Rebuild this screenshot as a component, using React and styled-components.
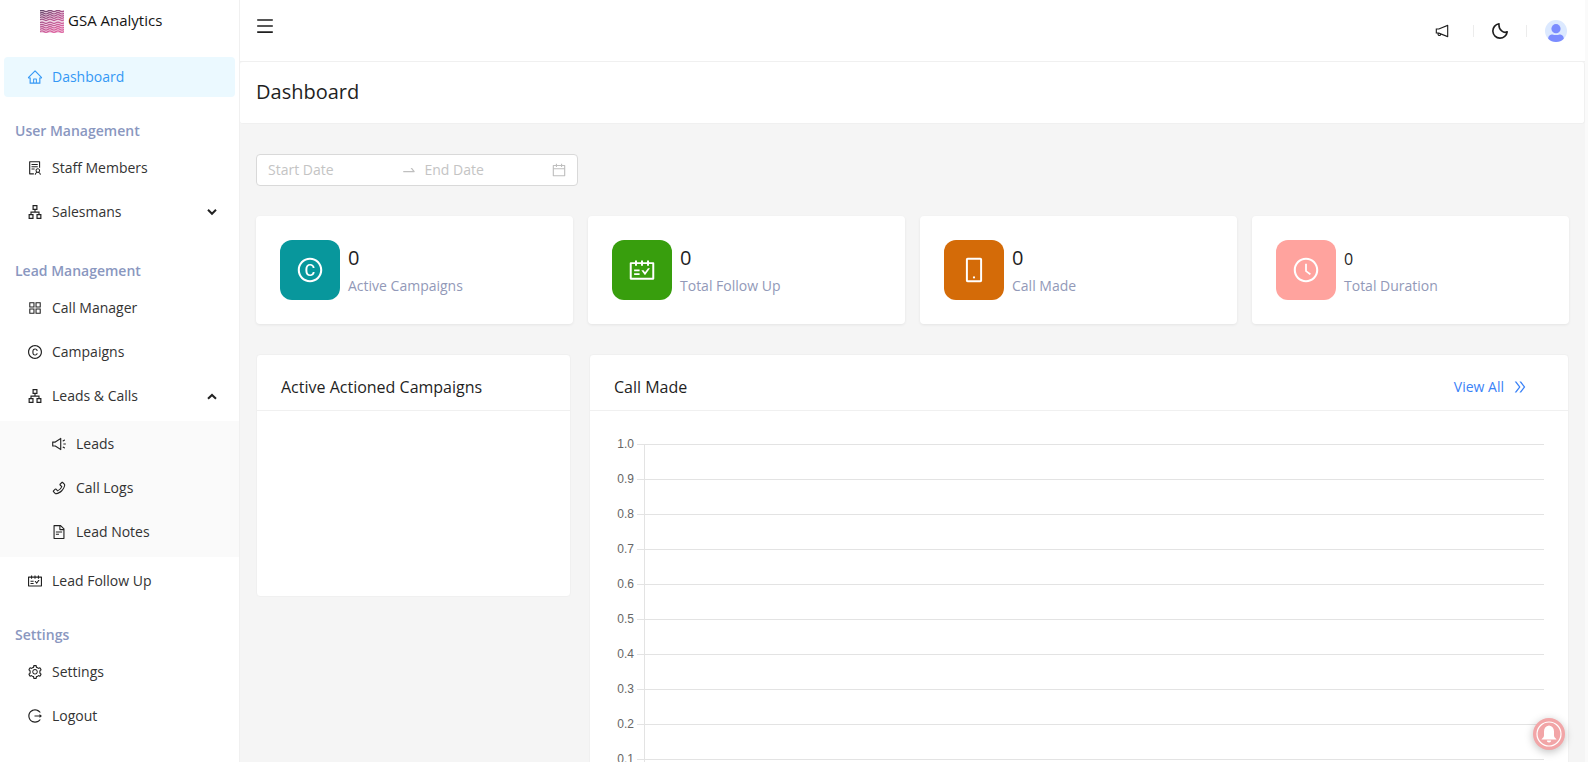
import React from 'react';
import styled, { createGlobalStyle } from 'styled-components';
import {
  AiOutlineApartment,
  AiOutlineAppstore,
  AiOutlineCalendar,
  AiOutlineClockCircle,
  AiOutlineCopyright,
  AiOutlineDoubleRight,
  AiOutlineFileText,
  AiOutlineHome,
  AiOutlineLogout,
  AiOutlineMenu,
  AiOutlineMobile,
  AiOutlineNotification,
  AiOutlinePhone,
  AiOutlineSchedule,
  AiOutlineSetting,
  AiOutlineSolution,
  AiOutlineSound,
  AiOutlineSwapRight,
} from 'react-icons/ai';

const GlobalStyle = createGlobalStyle`
  *, *::before, *::after { box-sizing: border-box; }
  body {
    margin: 0;
    background: #fafafa;
    color: #1f1f1f;
    font-family: 'Open Sans', 'Noto Sans', sans-serif;
    font-size: 14px;
    line-height: 22px;
  }
  h1, h2, h3, p, ul { margin: 0; padding: 0; }
  ul { list-style: none; }
  svg { display: block; flex: none; }
  button { font: inherit; color: inherit; background: none; border: 0; padding: 0; cursor: pointer; }
`;

const Shell = styled.div`
  display: flex;
  height: 100vh;
  padding-right: 3px;
  overflow: hidden;
`;

const Sidebar = styled.aside`
  flex: none;
  width: 240px;
  overflow: hidden;
  background: #fff;
  border-right: 1px solid #f0f0f0;
`;

const Brand = styled.a`
  display: flex;
  align-items: center;
  gap: 4px;
  height: 42px;
  margin-bottom: 15px;
  padding-left: 40px;
  color: #141414;
  font-size: 15px;
  text-decoration: none;

  span { padding-bottom: 2px; }
`;

const Nav = styled.nav`
  display: flex;
  flex-direction: column;
  gap: 24px;
`;

const NavHeading = styled.h2`
  margin-bottom: 7px;
  padding-left: 15px;
  color: #8a97bf;
  font-size: 14px;
  font-weight: 600;
  line-height: 20px;
`;

const NavList = styled.ul`
  display: flex;
  flex-direction: column;
  gap: 4px;
`;

const NavLink = styled.a`
  display: flex;
  align-items: center;
  gap: 9px;
  width: auto;
  height: 40px;
  margin: 0 4px;
  padding: 0 18px 0 ${(p) => (p.$nested ? 47 : 23)}px;
  border-radius: 4px;
  background: ${(p) => (p.$active ? '#ebf9ff' : 'transparent')};
  color: ${(p) => (p.$active ? '#3498f5' : '#333')};
  text-decoration: none;

  svg { color: ${(p) => (p.$active ? '#3498f5' : '#222')}; }
`;

const NavToggle = styled(NavLink)`
  width: calc(100% - 8px);
  text-align: left;

  span { flex: 1; }
`;

const Collapsible = styled.li`
  display: flex;
  flex-direction: column;
  gap: 5px;
`;

const Submenu = styled.ul`
  display: flex;
  flex-direction: column;
  gap: 4px;
  padding: ${(p) => (p.$open ? '3px 0 5px' : '0')};
  background: #fafafa;
`;

const Main = styled.div`
  flex: 1;
  min-width: 0;
  overflow: hidden;
  background: #f5f5f5;
`;

const TopBar = styled.header`
  display: flex;
  align-items: center;
  justify-content: space-between;
  height: 62px;
  padding: 0 18px 0 15px;
  background: #fff;
  border-bottom: 1px solid #f0f0f0;
`;

const MenuButton = styled.button`
  padding-bottom: 9px;
`;

const Tools = styled.div`
  display: flex;
  align-items: center;
  gap: 18px;
`;

const ToolButton = styled.button`
  display: flex;
  justify-content: center;
  width: ${(p) => p.$width}px;
`;

const Separator = styled.span`
  width: 1px;
  height: 12px;
  background: #ececec;
`;

const PageTitle = styled.div`
  padding: 14px 16px 16px;
  background: #fff;
  border-right: 1px solid #f0f0f0;
  border-bottom: 1px solid #f0f0f0;
  border-radius: 3px;

  h1 {
    font-size: 20px;
    font-weight: 400;
    line-height: 31px;
  }
`;

const Content = styled.main`
  display: flex;
  flex-direction: column;
  gap: 30px;
  padding: 30px 16px;
`;

const RangePicker = styled.div`
  display: flex;
  align-items: center;
  width: 322px;
  height: 32px;
  padding: 0 10px 0 11px;
  background: #fff;
  border: 1px solid #d9d9d9;
  border-radius: 4px;
  color: #bfbfbf;
`;

const RangeArrow = styled.span`
  padding: 0 8px 0 6px;
`;

const DateInput = styled.input`
  flex: 1;
  min-width: 0;
  padding: 0;
  border: 0;
  outline: 0;
  background: transparent;
  color: #333;
  font: inherit;

  &::placeholder { color: #c4c4c4; opacity: 1; }
`;

const StatGrid = styled.section`
  display: grid;
  grid-template-columns: repeat(4, 1fr);
  gap: 15px;
`;

const StatCard = styled.article`
  display: flex;
  gap: 8px;
  padding: 24px;
  background: #fff;
  border-radius: 4px;
  box-shadow: 0 1px 3px rgba(0, 0, 0, 0.07);
`;

const StatIcon = styled.span`
  display: grid;
  place-items: center;
  width: 60px;
  height: 60px;
  border-radius: 12px;
  background: ${(p) => p.$color};
  color: #fff;
`;

const StatText = styled.div`
  display: flex;
  flex-direction: column;
  justify-content: space-between;
  height: 56px;
  padding-top: 3px;
`;

const StatValue = styled.p`
  font-size: ${(p) => (p.$small ? 16 : 20)}px;
  line-height: ${(p) => (p.$small ? 32 : 29)}px;
`;

const StatLabel = styled.p`
  color: #9299b8;
  line-height: 21px;
`;

const PanelGrid = styled.section`
  display: grid;
  grid-template-columns: 9fr 28fr;
  align-items: start;
  gap: 18px;
`;

const Panel = styled.article`
  min-width: 0;
  background: #fff;
  border: 1px solid #f0f0f0;
  border-radius: 4px;
`;

const PanelHeader = styled.header`
  display: flex;
  align-items: center;
  justify-content: space-between;
  height: 56px;
  padding: 8px 24px 0;
  border-bottom: 1px solid #f0f0f0;

  h2 {
    font-size: 16px;
    font-weight: 400;
    line-height: 24px;
  }
`;

const PanelBody = styled.div`
  min-height: 185px;
  padding: 24px;
`;

const ViewAll = styled.a`
  display: flex;
  align-items: center;
  gap: 8px;
  padding: 0 16px;
  color: #3a82f7;
  text-decoration: none;
`;

const Chart = styled.svg`
  width: 100%;
  height: 400px;

  line { stroke: #e3e3e3; shape-rendering: crispEdges; }
  text {
    fill: #666;
    font-family: 'Liberation Sans', Arial, sans-serif;
    font-size: 12px;
    text-anchor: end;
  }
`;

const NotifyButton = styled.button`
  position: fixed;
  right: 23px;
  bottom: 12px;
  width: 32px;
  height: 32px;
  border-radius: 50%;
  background: #f2a5a7;
  box-shadow: 0 2px 8px rgba(0, 0, 0, 0.25);
`;

const WAVE_ROWS = [1, 3.2, 5.4, 7.6, 9.8, 12.8, 15, 17.2, 19.4, 21.6];

function LogoMark() {
  return (
    <svg width="24" height="23" viewBox="0 0 24 23" fill="none" strokeWidth="1.3">
      <defs>
        <linearGradient id="waves" gradientUnits="userSpaceOnUse" x1="0" y1="0" x2="12" y2="23">
          <stop offset="0" stopColor="#5d4668" />
          <stop offset="0.5" stopColor="#b0568f" />
          <stop offset="1" stopColor="#dd629f" />
        </linearGradient>
      </defs>
      <rect width="24" height="23" fill="#f0d5e5" />
      {WAVE_ROWS.map((y) => (
        <path key={y} stroke="url(#waves)" d={`M0 ${y}q2-1.4 4 0t4 0t4 0t4 0t4 0t4 0`} />
      ))}
    </svg>
  );
}

function Chevron({ up }) {
  return (
    <svg width="10" height="8" viewBox="0 0 10 8" fill="none" stroke="currentColor" strokeWidth="2">
      <path d={up ? 'M1 6.8L5 3L9 6.8' : 'M1 1.8L5 5.8L9 1.8'} />
    </svg>
  );
}

function Moon() {
  return (
    <svg width="16" height="16" viewBox="0 0 16 16" fill="none" stroke="#1f1f1f" strokeWidth="1.6" strokeLinejoin="round">
      <path d="M7 0.8A7.2 7.2 0 1 0 15.2 8.8C12 10.4 6.4 7.6 7 0.8Z" />
    </svg>
  );
}

function Avatar() {
  return (
    <svg width="22" height="22" viewBox="0 0 22 22">
      <circle cx="11" cy="11" r="11" fill="#dce9ff" />
      <circle cx="11" cy="8.7" r="4.6" fill="#7b8cff" />
      <path d="M3.2 18.7C3.2 15.5 5.5 14.4 7.4 14.4C9.6 15.3 12.4 15.3 14.6 14.4C16.5 14.4 18.8 15.5 18.8 18.7A11 11 0 0 1 3.2 18.7Z" fill="#7b8cff" />
    </svg>
  );
}

function Bell() {
  return (
    <svg width="32" height="32" viewBox="0 0 32 32">
      <circle cx="16" cy="16" r="12" fill="none" stroke="#fff" strokeWidth="1.2" />
      <path d="M16 7.6C12.6 8.1 11 10.4 11 13.4V17.2C11 18.9 9.9 19.8 8.4 21.4H23.6C22.1 19.8 21 18.9 21 17.2V13.4C21 10.4 19.4 8.1 16 7.6Z" fill="#fff" />
      <path d="M13.8 22.4H18.2A2.2 2 0 0 1 13.8 22.4Z" fill="#fff" />
    </svg>
  );
}

function NavItem({ icon: Icon, label, active, nested }) {
  return (
    <li>
      <NavLink href="#" $active={active} $nested={nested} aria-current={active ? 'page' : undefined}>
        <Icon size={16} />
        <span>{label}</span>
      </NavLink>
    </li>
  );
}

function NavGroup({ icon: Icon, label, open, children }) {
  return (
    <Collapsible>
      <NavToggle as="button" type="button" aria-expanded={Boolean(open)}>
        <Icon size={16} />
        <span>{label}</span>
        <Chevron up={open} />
      </NavToggle>
      <Submenu $open={open}>{open ? children : null}</Submenu>
    </Collapsible>
  );
}

const STATS = [
  { label: 'Active Campaigns', icon: AiOutlineCopyright, color: '#08979c' },
  { label: 'Total Follow Up', icon: AiOutlineSchedule, color: '#389e0d' },
  { label: 'Call Made', icon: AiOutlineMobile, color: '#d46b08' },
  { label: 'Total Duration', icon: AiOutlineClockCircle, color: '#ffa39e', small: true },
];

const TICKS = ['1.0', '0.9', '0.8', '0.7', '0.6', '0.5', '0.4', '0.3', '0.2', '0.1', '0'];

function CallChart() {
  return (
    <Chart role="img" aria-label="Call Made">
      {TICKS.map((tick, i) => {
        const y = 9 + i * 35;
        return (
          <g key={tick}>
            <text x="20" y={y + 4}>{tick}</text>
            <line x1="23" x2="100%" y1={y} y2={y} />
          </g>
        );
      })}
      <line x1="30" x2="30" y1="9" y2="359" />
    </Chart>
  );
}

export default function App() {
  return (
    <Shell>
      <GlobalStyle />
      <Sidebar>
        <Brand href="#">
          <LogoMark />
          <span>GSA Analytics</span>
        </Brand>
        <Nav aria-label="Main">
          <NavList>
            <NavItem icon={AiOutlineHome} label="Dashboard" active />
          </NavList>
          <section>
            <NavHeading>User Management</NavHeading>
            <NavList>
              <NavItem icon={AiOutlineSolution} label="Staff Members" />
              <NavGroup icon={AiOutlineApartment} label="Salesmans" />
            </NavList>
          </section>
          <section>
            <NavHeading>Lead Management</NavHeading>
            <NavList>
              <NavItem icon={AiOutlineAppstore} label="Call Manager" />
              <NavItem icon={AiOutlineCopyright} label="Campaigns" />
              <NavGroup icon={AiOutlineApartment} label="Leads & Calls" open>
                <NavItem icon={AiOutlineSound} label="Leads" nested />
                <NavItem icon={AiOutlinePhone} label="Call Logs" nested />
                <NavItem icon={AiOutlineFileText} label="Lead Notes" nested />
              </NavGroup>
              <NavItem icon={AiOutlineSchedule} label="Lead Follow Up" />
            </NavList>
          </section>
          <section>
            <NavHeading>Settings</NavHeading>
            <NavList>
              <NavItem icon={AiOutlineSetting} label="Settings" />
              <NavItem icon={AiOutlineLogout} label="Logout" />
            </NavList>
          </section>
        </Nav>
      </Sidebar>

      <Main>
        <TopBar>
          <MenuButton type="button" aria-label="Toggle menu">
            <AiOutlineMenu size={20} />
          </MenuButton>
          <Tools>
            <ToolButton type="button" $width={26} aria-label="Announcements">
              <AiOutlineNotification size={16} />
            </ToolButton>
            <Separator />
            <ToolButton type="button" $width={16} aria-label="Dark mode">
              <Moon />
            </ToolButton>
            <Separator />
            <ToolButton type="button" $width={22} aria-label="Account">
              <Avatar />
            </ToolButton>
          </Tools>
        </TopBar>

        <PageTitle>
          <h1>Dashboard</h1>
        </PageTitle>

        <Content>
          <RangePicker>
            <DateInput type="text" placeholder="Start Date" aria-label="Start Date" />
            <RangeArrow>
              <AiOutlineSwapRight size={16} />
            </RangeArrow>
            <DateInput type="text" placeholder="End Date" aria-label="End Date" />
            <AiOutlineCalendar size={16} />
          </RangePicker>

          <StatGrid>
            {STATS.map(({ label, icon: Icon, color, small }) => (
              <StatCard key={label}>
                <StatIcon $color={color}>
                  <Icon size={28} />
                </StatIcon>
                <StatText>
                  <StatValue $small={small}>0</StatValue>
                  <StatLabel>{label}</StatLabel>
                </StatText>
              </StatCard>
            ))}
          </StatGrid>

          <PanelGrid>
            <Panel>
              <PanelHeader>
                <h2>Active Actioned Campaigns</h2>
              </PanelHeader>
              <PanelBody />
            </Panel>
            <Panel>
              <PanelHeader>
                <h2>Call Made</h2>
                <ViewAll href="#">
                  View All
                  <AiOutlineDoubleRight size={16} />
                </ViewAll>
              </PanelHeader>
              <PanelBody>
                <CallChart />
              </PanelBody>
            </Panel>
          </PanelGrid>
        </Content>
      </Main>

      <NotifyButton type="button" aria-label="Notifications">
        <Bell />
      </NotifyButton>
    </Shell>
  );
}
